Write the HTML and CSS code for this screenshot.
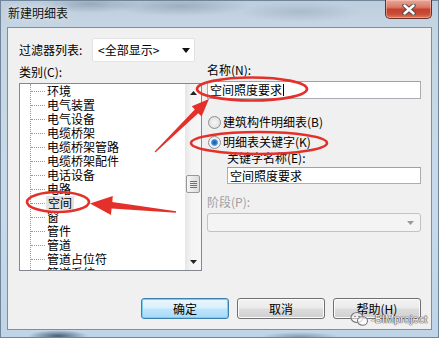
FILE: index.html
```html
<!DOCTYPE html>
<html lang="zh-CN">
<head>
<meta charset="utf-8">
<title>新建明细表</title>
<link rel="stylesheet" href="styles.css">
</head>
<body>
<div class="window">
  <div class="titlebar">
    <span class="title">新建明细表</span>
    <div class="close">
      <svg width="14" height="11" viewBox="0 0 14 11">
        <path d="M2.5 1.5 L11.5 9.5 M11.5 1.5 L2.5 9.5" stroke="#5a4a48" stroke-width="4.4" stroke-linecap="round"/>
        <path d="M2.5 1.5 L11.5 9.5 M11.5 1.5 L2.5 9.5" stroke="#ffffff" stroke-width="2.4" stroke-linecap="round"/>
      </svg>
    </div>
  </div>
  <div class="client">
    <div class="left">
      <div class="filter-row">
        <span class="filter-lbl">过滤器列表:</span>
        <div class="combo">
          <span class="combo-text">&lt;全部显示&gt;</span>
          <svg class="combo-arrow" width="8" height="5" viewBox="0 0 8 5"><path d="M0 0 H8 L4 5 Z" fill="#111"/></svg>
        </div>
      </div>
      <div class="lbl cat-lbl">类别(C):</div>
      <div class="listbox">
        <div class="tree-wrap">
          <ul class="tree">
            <li><span>环境</span></li>
            <li><span>电气装置</span></li>
            <li><span>电气设备</span></li>
            <li><span>电缆桥架</span></li>
            <li><span>电缆桥架管路</span></li>
            <li><span>电缆桥架配件</span></li>
            <li><span>电话设备</span></li>
            <li><span>电路</span></li>
            <li><span class="sel">空间</span></li>
            <li><span>窗</span></li>
            <li><span>管件</span></li>
            <li><span>管道</span></li>
            <li><span>管道占位符</span></li>
            <li><span>管道系统</span></li>
          </ul>
        </div>
        <div class="vscroll">
          <div class="sb-btn"><svg width="7" height="4" viewBox="0 0 7 4"><path d="M0 4 H7 L3.5 0 Z" fill="#222"/></svg></div>
          <div class="sb-space"></div>
          <div class="sb-thumb"><i></i><i></i><i></i><i></i></div>
          <div class="sb-rest"></div>
          <div class="sb-btn"><svg width="7" height="4" viewBox="0 0 7 4"><path d="M0 0 H7 L3.5 4 Z" fill="#222"/></svg></div>
        </div>
      </div>
    </div>
    <div class="right">
      <div class="lbl name-lbl">名称(N):</div>
      <div class="textbox tb-name">空间照度要求<span class="caret"></span></div>
      <div class="radio-row r1"><span class="radio"></span><span>建筑构件明细表(B)</span></div>
      <div class="radio-row r2"><span class="radio checked"></span><span>明细表关键字(K)</span></div>
      <div class="lbl kw-lbl">关键字名称(E):</div>
      <div class="textbox tb-kw">空间照度要求</div>
      <div class="lbl stage-lbl">阶段(P):</div>
      <div class="combo-disabled">
        <svg width="7" height="4" viewBox="0 0 7 4"><path d="M0 0 H7 L3.5 4 Z" fill="#9a9a9a"/></svg>
      </div>
    </div>
    <div class="buttons">
      <button class="btn btn-default">确定</button>
      <button class="btn">取消</button>
      <button class="btn">帮助(H)</button>
    </div>
  </div>
  <div class="watermark">
    <svg width="19" height="16" viewBox="0 0 19 16">
      <ellipse cx="7" cy="6.5" rx="6" ry="5" fill="rgba(255,255,255,0.5)" stroke="#7a7a7a" stroke-width="1.1"/>
      <ellipse cx="12.5" cy="10" rx="5" ry="4.2" fill="rgba(255,255,255,0.7)" stroke="#7a7a7a" stroke-width="1.1"/>
      <circle cx="5" cy="5.5" r="0.8" fill="#7a7a7a"/>
      <circle cx="9" cy="5.5" r="0.8" fill="#7a7a7a"/>
    </svg>
    <span>-BIMproject</span>
  </div>
  <svg class="annot" width="439" height="338" viewBox="0 0 439 338">
    <g fill="none" stroke="#e3302a" stroke-width="2.6">
      <ellipse cx="252" cy="89" rx="55" ry="11.5"/>
      <ellipse cx="259" cy="143" rx="68" ry="11"/>
      <ellipse cx="58" cy="202" rx="31" ry="10"/>
    </g>
    <g fill="#e3302a">
      <polygon points="154.6,151.6 155.4,152.4 198.2,113.2 201.6,116.4 209,99 191.8,106.2 194.8,109.6"/>
      <polygon points="176.1,211.2 175.9,212.8 111.6,208.6 111,215 90,203.5 112.8,196 112.3,202"/>
    </g>
  </svg>
</div>
</body>
</html>
```

FILE: styles.css
```css
html, body {
  margin: 0;
  padding: 0;
  background: #ffffff;
}

.window {
  position: relative;
  width: 439px;
  height: 338px;
  box-sizing: border-box;
  display: flex;
  flex-direction: column;
  font-family: "Noto Sans CJK SC", "Liberation Sans", sans-serif;
  font-size: 12px;
  color: #000;
  overflow: hidden;
  background:
    radial-gradient(ellipse 30px 6px at 58px 336px, rgba(30, 55, 80, 0.75), transparent),
    radial-gradient(ellipse 40px 5px at 300px 337px, rgba(60, 80, 100, 0.45), transparent),
    radial-gradient(ellipse 50px 9px at 90px 4px, rgba(80, 100, 120, 0.35), transparent),
    radial-gradient(ellipse 70px 10px at 180px 6px, rgba(80, 100, 120, 0.30), transparent),
    radial-gradient(ellipse 60px 10px at 300px 12px, rgba(90, 110, 130, 0.22), transparent),
    linear-gradient(to bottom, #bccddd 0px, #c6d5e3 26px, #c8daea 60%, #bfd4e6 100%);
  box-shadow: inset 0 0 0 1px #71859a;
}

.titlebar {
  height: 27px;
  flex: none;
  display: flex;
  align-items: flex-start;
}

.title {
  margin: 5px 0 0 8px;
  line-height: 16px;
  font-size: 12px;
  color: #111;
  text-shadow: 0 0 6px rgba(255, 255, 255, 0.8);
}

.close {
  margin-left: auto;
  margin-right: 7px;
  width: 47px;
  height: 19px;
  box-sizing: border-box;
  border: 1px solid #6a2f28;
  border-top: none;
  border-radius: 0 0 5px 5px;
  background: linear-gradient(to bottom, #e9a999 0%, #d97a66 40%, #c5412f 52%, #c84c36 78%, #dd7c5c 100%);
  box-shadow: inset 0 0 0 1px rgba(255, 210, 200, 0.45);
  display: flex;
  align-items: center;
  justify-content: center;
}

.client {
  flex: 1;
  margin: 0 7px 8px 7px;
  background: #f0f0f0;
  border: 1px solid #7b8fa4;
  display: grid;
  grid-template-columns: 183px 214px;
  grid-template-rows: 243px auto;
  column-gap: 5px;
  padding: 0 10px 0 11px;
}

.lbl {
  line-height: 14px;
  height: 14px;
  white-space: nowrap;
}

/* left column */
.filter-row {
  margin-top: 10px;
  height: 24px;
  display: flex;
  align-items: center;
}

.filter-lbl {
  width: 73px;
  line-height: 14px;
}

.combo {
  width: 103px;
  height: 24px;
  box-sizing: border-box;
  background: #ffffff;
  border: 1px solid #e2e2e2;
  border-radius: 2px;
  display: flex;
  align-items: center;
  padding: 0 4px 0 5px;
}

.combo-text {
  flex: 1;
  line-height: 14px;
}

.combo-arrow {
  margin-top: 1px;
}

.cat-lbl {
  margin-top: 3px;
}

.listbox {
  margin-top: 4px;
  height: 188px;
  box-sizing: border-box;
  border: 1px solid #828790;
  background: #ffffff;
  display: flex;
  overflow: hidden;
}

.tree-wrap {
  flex: 1;
  overflow: hidden;
}

.tree {
  list-style: none;
  margin: 0 0 0 10px;
  padding: 0;
  border-left: 1px dotted #9a9a9a;
  min-height: 100%;
}

.tree li {
  height: 14px;
  display: flex;
  align-items: center;
  white-space: nowrap;
  line-height: 14px;
}

.tree li::before {
  content: "";
  width: 14px;
  border-top: 1px dotted #9a9a9a;
  margin-right: 1px;
  flex: none;
}

.tree li span {
  padding: 0 1px;
}

.tree li .sel {
  background: #e3e3e3;
  padding: 0 2px;
}

.vscroll {
  width: 16px;
  flex: none;
  display: flex;
  flex-direction: column;
  background: linear-gradient(to right, #e6e6e6, #f4f4f4 40%, #f6f6f6);
}

.sb-btn {
  height: 17px;
  flex: none;
  display: flex;
  align-items: center;
  justify-content: center;
}

.sb-space {
  height: 74px;
  flex: none;
}

.sb-thumb {
  height: 18px;
  margin: 0 1px;
  box-sizing: border-box;
  border: 1px solid #979797;
  border-radius: 2px;
  background: linear-gradient(to right, #f6f6f6, #e8e8e8 50%, #dcdcdc);
  display: flex;
  flex-direction: column;
  justify-content: center;
  align-items: center;
  gap: 1px;
  flex: none;
}

.sb-thumb i {
  display: block;
  width: 7px;
  height: 1px;
  background: #707070;
}

.sb-rest {
  flex: 1;
}

/* right column */
.name-lbl {
  margin-top: 35px;
}

.textbox {
  height: 18px;
  box-sizing: border-box;
  border: 1px solid #abadb3;
  border-top-color: #9ea0a6;
  background: #ffffff;
  line-height: 16px;
  padding-left: 2px;
  display: flex;
  align-items: center;
  white-space: nowrap;
}

.tb-name {
  margin-top: 4px;
}

.caret {
  display: inline-block;
  width: 1px;
  height: 12px;
  background: #000;
  margin-left: 1px;
}

.radio-row {
  height: 14px;
  display: flex;
  align-items: center;
  gap: 2px;
  line-height: 14px;
  padding-left: 1px;
  white-space: nowrap;
}

.r1 {
  margin-top: 16px;
}

.r2 {
  margin-top: 6px;
}

.radio {
  width: 13px;
  height: 13px;
  flex: none;
  box-sizing: border-box;
  border-radius: 50%;
  border: 1px solid #8d8f90;
  background: radial-gradient(circle at 50% 50%, #f6f6f6 0, #e6e6e6 55%, #d0d0d0 100%);
}

.radio.checked {
  background: radial-gradient(circle at 50% 50%, #1256a6 0, #2c7fd4 2.2px, #6aaee9 3.2px, #f4f4f4 3.9px, #e2e2e2 100%);
}

.kw-lbl {
  margin-top: 2px;
  padding-left: 20px;
}

.tb-kw {
  margin-top: 2px;
  margin-left: 20px;
  height: 17px;
}

.stage-lbl {
  margin-top: 11px;
  color: #a0a0a0;
}

.combo-disabled {
  margin-top: 4px;
  height: 19px;
  box-sizing: border-box;
  border: 1px solid #c2c2c2;
  border-radius: 3px;
  background: #f4f4f4;
  display: flex;
  align-items: center;
  justify-content: flex-end;
  padding-right: 6px;
}

/* buttons */
.buttons {
  grid-column: 1 / -1;
  margin-top: 27px;
  display: flex;
  justify-content: flex-end;
  gap: 8px;
  align-self: start;
}

.btn {
  width: 88px;
  height: 21px;
  box-sizing: border-box;
  margin: 0;
  padding: 0;
  font-family: "Noto Sans CJK SC", "Liberation Sans", sans-serif;
  font-size: 12px;
  line-height: 14px;
  color: #000;
  border: 1px solid #707070;
  border-radius: 3px;
  background: linear-gradient(to bottom, #f2f2f2 0%, #ebebeb 48%, #dddddd 52%, #cfcfcf 100%);
  box-shadow: inset 0 0 0 1px #fbfbfb;
}

.btn-default {
  border-color: #3c7fb1;
  background: linear-gradient(to bottom, #eaf6fd 0%, #d9f0fc 48%, #bee6fd 52%, #a7d9f5 100%);
  box-shadow: inset 0 0 0 1px #7ecdef;
}

/* overlays */
.watermark {
  position: absolute;
  left: 350px;
  top: 311px;
  display: flex;
  align-items: center;
  gap: 2px;
  font-family: "Liberation Sans", sans-serif;
  font-size: 11px;
  color: #f4f4f4;
  text-shadow: 0 0 1px #444, 0 0 1px #444, 0 0 1px #555;
}

.annot {
  position: absolute;
  left: 0;
  top: 0;
  pointer-events: none;
}
```
